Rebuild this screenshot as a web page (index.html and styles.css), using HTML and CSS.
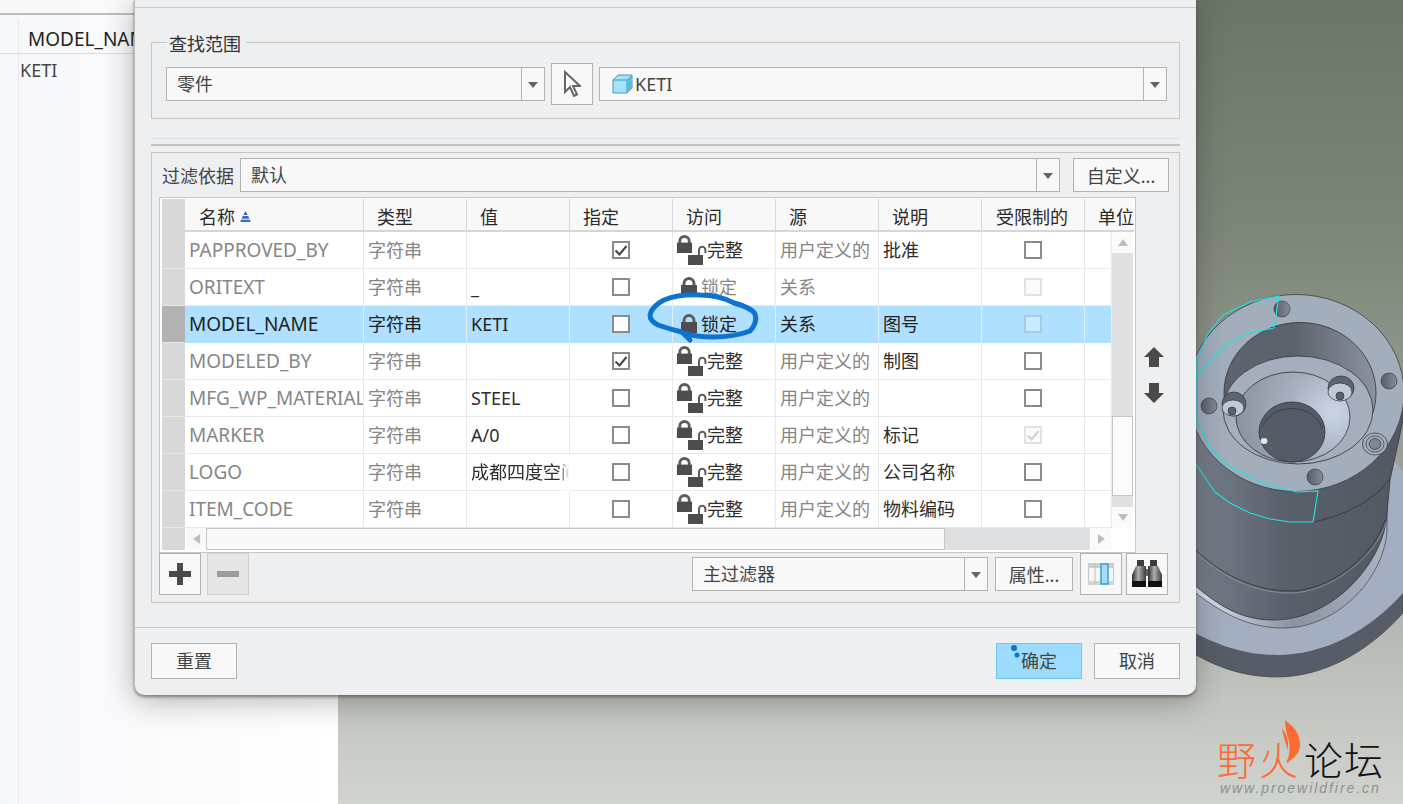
FILE: index.html
```html
<!DOCTYPE html>
<html lang="zh-CN">
<head>
<meta charset="utf-8">
<title>参数</title>
<link rel="stylesheet" href="styles.css">
</head>
<body>
<svg class="defs" width="0" height="0" aria-hidden="true">
  <defs>
    <symbol id="lock" viewBox="0 0 18 20">
      <path d="M4 9V6.500a5 5 0 0 1 10 0V9" fill="none" stroke="#5c5c5c" stroke-width="3"/>
      <rect x="1" y="8" width="16" height="11" fill="#4d4d4d"/>
    </symbol>
    <symbol id="lock-open" viewBox="0 0 19 20">
      <path d="M11 10V5a3.200 3.200 0 0 1 6.400 0V8" fill="none" stroke="#5c5c5c" stroke-width="2"/>
      <rect x="0" y="10" width="15" height="10" fill="#4d4d4d"/>
    </symbol>
    <symbol id="tick" viewBox="0 0 18 18">
      <path d="M3.500 9.500l4 4 7-8.500" fill="none" stroke="currentColor" stroke-width="2"/>
    </symbol>
  </defs>
</svg>

<div class="screen">
  <aside class="tree">
    <div class="tree-head"><span class="tree-gap"></span><span class="tree-title">MODEL_NAME</span></div>
    <div class="tree-row">KETI</div>
  </aside>

  <main class="viewport">
    <svg class="model" viewBox="338 0 1065 804" width="1065" height="804" aria-hidden="true">
      <defs>
        <linearGradient id="side" gradientUnits="userSpaceOnUse" x1="1190" x2="1400" y1="0" y2="0">
          <stop offset="0" stop-color="#78818d"/><stop offset=".45" stop-color="#5a606b"/><stop offset="1" stop-color="#535963"/>
        </linearGradient>
        <linearGradient id="wall" x1="0" x2="1" y1="0" y2="0">
          <stop offset="0" stop-color="#5e646e"/><stop offset=".45" stop-color="#5c626c"/><stop offset="1" stop-color="#8b939f"/>
        </linearGradient>
        <radialGradient id="bowl" gradientUnits="userSpaceOnUse" cx="1333" cy="412" r="95">
          <stop offset="0" stop-color="#cad6e7"/><stop offset=".5" stop-color="#a4aebd"/><stop offset="1" stop-color="#8b94a1"/>
        </radialGradient>
        <linearGradient id="bolt" x1="0" x2="1" y1="0" y2="0">
          <stop offset="0" stop-color="#565c66"/><stop offset="1" stop-color="#868d98"/>
        </linearGradient>
        <linearGradient id="fillet" gradientUnits="userSpaceOnUse" x1="1196" x2="1390" y1="0" y2="0">
          <stop offset="0" stop-color="#dfe5ee"/><stop offset=".5" stop-color="#8a93a1"/><stop offset="1" stop-color="#aab4c3"/>
        </linearGradient>
      </defs>
      <path d="M1180 500H1403V613C1370 650 1325 677 1277 677C1240 677 1210 665 1180 645Z" fill="#575d68" stroke="#3e424a" stroke-width=".7"/>
      <path d="M1393 460L1403 472V593C1370 630 1325 655 1277 655C1240 655 1210 642 1180 625V460Z" fill="#a3afc0"/>
      <path d="M1387 510V530C1385 575 1340 628 1283 628C1245 628 1215 610 1180 580V510Z" fill="url(#fillet)" stroke="#3e424a" stroke-width=".7"/>
      <path d="M1180 380H1403V420L1390 480L1387 513C1385 560 1335 620 1273 620C1240 620 1215 605 1180 572Z" fill="url(#side)" stroke="#30343a" stroke-width=".8"/>
      <path d="M1180 533C1210 570 1250 591 1290 591C1330 591 1375 555 1385 520" fill="none" stroke="#30343a" stroke-width=".8"/>
      <path d="M1180 535C1210 572 1250 593 1290 593C1330 593 1376 557 1386 522" fill="none" stroke="#8f98a6" stroke-width=".8"/>
      <path d="M1313 522C1350 515 1380 495 1390 478" fill="none" stroke="#30343a" stroke-width=".8"/>
      <ellipse cx="1296" cy="393" rx="108" ry="98.500" fill="#a3aebd" stroke="#3a3e45" stroke-width=".8"/>
      <ellipse cx="1300" cy="393" rx="76" ry="70.500" fill="url(#wall)" stroke="#2e3238" stroke-width=".8"/>
      <ellipse cx="1298" cy="410" rx="75" ry="54" fill="#a4aebd" stroke="#2e3238" stroke-width=".8"/>
      <ellipse cx="1293" cy="417" rx="57" ry="45" fill="url(#bowl)" stroke="#2e3238" stroke-width=".8"/>
      <ellipse cx="1292" cy="432" rx="33" ry="30" fill="#565c67" stroke="#2e3238" stroke-width=".8"/>
      <path d="M1262 428a31 26 0 0 1 60 0" fill="none" stroke="#2e3238" stroke-width=".7"/>
      <ellipse cx="1264" cy="441" rx="3.500" ry="3" fill="#e0e5ec"/>
      <g fill="url(#bolt)" stroke="#2e3238" stroke-width=".6">
        <circle cx="1282" cy="309" r="8"/>
        <circle cx="1389" cy="381" r="8"/>
        <circle cx="1209" cy="406" r="8"/>
        <circle cx="1315" cy="477" r="8"/>
      </g>
      <g stroke="#2e3238" stroke-width=".7">
        <ellipse cx="1341" cy="388" rx="13" ry="12" fill="#5f6570"/>
        <ellipse cx="1340" cy="392" rx="12" ry="9" fill="#c0c9d6"/>
        <ellipse cx="1340" cy="396" rx="4" ry="4" fill="#5b616c"/>
        <ellipse cx="1234" cy="404" rx="12" ry="12" fill="#5f6570"/>
        <ellipse cx="1233" cy="408" rx="11" ry="8" fill="#c0c9d6"/>
        <ellipse cx="1232" cy="411" rx="4" ry="4" fill="#5b616c"/>
        <ellipse cx="1375" cy="444" rx="12.500" ry="11" fill="#a3aebd"/>
        <ellipse cx="1375" cy="444" rx="9" ry="8" fill="#a8b1bf"/>
        <ellipse cx="1375" cy="444" rx="6" ry="5.500" fill="#7f8792"/>
      </g>
      <path d="M1274 328L1279 296L1250 302L1223 315L1207 335L1196 365V418L1210 448L1230 467L1267 485L1297 492L1318 491L1313 522L1290 522L1270 519L1250 513L1230 503L1215 492L1208 482L1190 455M1274 328L1250 333L1230 342L1213 357L1190 385" fill="none" stroke="#1de3e3" stroke-width="1.200"/>
    </svg>
    <div class="logo">
      <svg class="flame" viewBox="0 0 20 44" width="20" height="44" aria-hidden="true">
        <path d="M4 0C14 7 19 15 19 25C19 32 14 38 6 43C9 32 10 25 6 15C5 10 4 5 4 0zM1 8C5 13 8 20 7 30C6 27 3 20 1 8z" fill="#ff6a33"/>
      </svg>
      <div class="logo-name"><span class="logo-hot">野火</span><span class="logo-cold">论坛</span></div>
      <div class="logo-url">www.proewildfire.cn</div>
    </div>
  </main>

  <section class="dialog">
    <div class="dialog-top"></div>
    <div class="dialog-body">
      <fieldset class="scope">
        <legend>查找范围</legend>
        <div class="scope-row">
          <div class="combo combo-part"><span class="combo-text">零件</span><span class="combo-arrow"></span></div>
          <button class="btn-icon" type="button" aria-label="选择">
            <svg viewBox="0 0 18 28" width="18" height="28"><path d="M2 2v20l5-5 4 9 3-1.500-4-8.500h7z" fill="#fff" stroke="#666" stroke-width="2"/></svg>
          </button>
          <div class="combo combo-model">
            <span class="combo-text combo-model-text">
              <svg viewBox="0 0 22 20" width="22" height="20"><path d="M1 6l5-5h14v13l-5 5H1z" fill="#a6e3f8" stroke="#3f9cc2"/><path d="M1 6h14v13M15 6l5-5" fill="none" stroke="#3f9cc2"/><path d="M15 6l5-5v13l-5 5z" fill="#5dbbdc"/></svg>KETI
            </span><span class="combo-arrow"></span>
          </div>
        </div>
      </fieldset>

      <div class="sash"></div>

      <div class="panel">
        <div class="filter-row">
          <span class="filter-label">过滤依据</span>
          <div class="combo combo-filter"><span class="combo-text">默认</span><span class="combo-arrow"></span></div>
          <button class="btn btn-custom" type="button">自定义...</button>
        </div>

        <div class="table-line">
          <div class="table">
            <div class="row head">
              <span class="gut"></span>
              <span class="c c-name">名称<svg class="sort" viewBox="0 0 12 12" width="13" height="13"><path d="M6 1l2 3.500H4zM3.500 5.500h5l1 2.500h-7zM1.500 9h9v2h-9z" fill="#3b69c4"/></svg></span>
              <span class="c c-h">类型</span>
              <span class="c c-h c-v">值</span>
              <span class="c c-h">指定</span>
              <span class="c c-h">访问</span>
              <span class="c c-h c-v">源</span>
              <span class="c c-h">说明</span>
              <span class="c c-lim">受限制的</span>
              <span class="c c-h c-unit">单位</span>
            </div>
            <div class="table-mid">
              <div class="rows">
                <div class="row">
                  <span class="gut"></span><span class="c c-left c-latin dim">PAPPROVED_BY</span><span class="c c-left dim">字符串</span><span class="c c-left"></span>
                  <span class="c c-mid"><span class="cb"><svg width="18" height="18"><use href="#tick"/></svg></span></span>
                  <span class="c acc"><svg class="i1" width="17" height="19"><use href="#lock"/></svg><svg class="i2" width="19" height="20"><use href="#lock-open"/></svg><span class="full">完整</span></span>
                  <span class="c c-left dim">用户定义的</span><span class="c c-left">批准</span>
                  <span class="c c-mid"><span class="cb"></span></span><span class="c"></span>
                </div>
                <div class="row">
                  <span class="gut"></span><span class="c c-left c-latin dim">ORITEXT</span><span class="c c-left dim">字符串</span><span class="c c-left">_</span>
                  <span class="c c-mid"><span class="cb"></span></span>
                  <span class="c acc acc-lock"><svg width="18" height="20"><use href="#lock"/></svg><span class="dim">锁定</span></span>
                  <span class="c c-left dim">关系</span><span class="c c-left"></span>
                  <span class="c c-mid"><span class="cb cb-off"></span></span><span class="c"></span>
                </div>
                <div class="row sel">
                  <span class="gut"></span><span class="c c-left c-latin">MODEL_NAME</span><span class="c c-left">字符串</span><span class="c c-left">KETI</span>
                  <span class="c c-mid"><span class="cb"></span></span>
                  <span class="c acc acc-lock"><svg width="18" height="20"><use href="#lock"/></svg><span>锁定</span></span>
                  <span class="c c-left">关系</span><span class="c c-left">图号</span>
                  <span class="c c-mid"><span class="cb cb-sel"></span></span><span class="c"></span>
                </div>
                <div class="row">
                  <span class="gut"></span><span class="c c-left c-latin dim">MODELED_BY</span><span class="c c-left dim">字符串</span><span class="c c-left"></span>
                  <span class="c c-mid"><span class="cb"><svg width="18" height="18"><use href="#tick"/></svg></span></span>
                  <span class="c acc"><svg class="i1" width="17" height="19"><use href="#lock"/></svg><svg class="i2" width="19" height="20"><use href="#lock-open"/></svg><span class="full">完整</span></span>
                  <span class="c c-left dim">用户定义的</span><span class="c c-left">制图</span>
                  <span class="c c-mid"><span class="cb"></span></span><span class="c"></span>
                </div>
                <div class="row">
                  <span class="gut"></span><span class="c c-left c-latin dim">MFG_WP_MATERIAL</span><span class="c c-left dim">字符串</span><span class="c c-left">STEEL</span>
                  <span class="c c-mid"><span class="cb"></span></span>
                  <span class="c acc"><svg class="i1" width="17" height="19"><use href="#lock"/></svg><svg class="i2" width="19" height="20"><use href="#lock-open"/></svg><span class="full">完整</span></span>
                  <span class="c c-left dim">用户定义的</span><span class="c c-left"></span>
                  <span class="c c-mid"><span class="cb"></span></span><span class="c"></span>
                </div>
                <div class="row">
                  <span class="gut"></span><span class="c c-left c-latin dim">MARKER</span><span class="c c-left dim">字符串</span><span class="c c-left">A/0</span>
                  <span class="c c-mid"><span class="cb"></span></span>
                  <span class="c acc"><svg class="i1" width="17" height="19"><use href="#lock"/></svg><svg class="i2" width="19" height="20"><use href="#lock-open"/></svg><span class="full">完整</span></span>
                  <span class="c c-left dim">用户定义的</span><span class="c c-left">标记</span>
                  <span class="c c-mid"><span class="cb cb-off cb-offtick"><svg width="18" height="18"><use href="#tick"/></svg></span></span><span class="c"></span>
                </div>
                <div class="row">
                  <span class="gut"></span><span class="c c-left c-latin dim">LOGO</span><span class="c c-left dim">字符串</span><span class="c c-left c-fade">成都四度空间</span>
                  <span class="c c-mid"><span class="cb"></span></span>
                  <span class="c acc"><svg class="i1" width="17" height="19"><use href="#lock"/></svg><svg class="i2" width="19" height="20"><use href="#lock-open"/></svg><span class="full">完整</span></span>
                  <span class="c c-left dim">用户定义的</span><span class="c c-left">公司名称</span>
                  <span class="c c-mid"><span class="cb"></span></span><span class="c"></span>
                </div>
                <div class="row">
                  <span class="gut"></span><span class="c c-left c-latin dim">ITEM_CODE</span><span class="c c-left dim">字符串</span><span class="c c-left"></span>
                  <span class="c c-mid"><span class="cb"></span></span>
                  <span class="c acc"><svg class="i1" width="17" height="19"><use href="#lock"/></svg><svg class="i2" width="19" height="20"><use href="#lock-open"/></svg><span class="full">完整</span></span>
                  <span class="c c-left dim">用户定义的</span><span class="c c-left">物料编码</span>
                  <span class="c c-mid"><span class="cb"></span></span><span class="c"></span>
                </div>
              </div>
              <div class="vbar">
                <span class="sb-btn"><span class="tri tri-up"></span></span>
                <span class="sb-track sb-track-a"></span>
                <span class="sb-thumb"></span>
                <span class="sb-track sb-track-b"></span>
                <span class="sb-btn"><span class="tri tri-down"></span></span>
              </div>
            </div>
            <div class="hbar">
              <span class="gut"></span>
              <span class="hb-btn"><span class="tri tri-left"></span></span>
              <span class="hb-thumb"></span>
              <span class="hb-track"></span>
              <span class="hb-btn hb-right"><span class="tri tri-right"></span></span>
            </div>
          </div>
          <div class="move">
            <svg viewBox="0 0 20 20" width="20" height="20"><path d="M10 0l10 10h-5v10H5V10H0z" fill="#4a4a4a"/></svg>
            <svg viewBox="0 0 20 20" width="20" height="20"><path d="M5 0h10v10h5L10 20 0 10h5z" fill="#4a4a4a"/></svg>
          </div>
        </div>

        <div class="tools">
          <button class="btn-icon" type="button" aria-label="添加">
            <svg viewBox="0 0 22 22" width="22" height="22"><path d="M8 0h6v8h8v6h-8v8H8v-8H0V8h8z" fill="#4a4a4a"/></svg>
          </button>
          <button class="btn-icon btn-off" type="button" aria-label="删除">
            <svg viewBox="0 0 22 6" width="22" height="6"><rect width="22" height="6" fill="#9c9c9c"/></svg>
          </button>
          <span class="tools-gap"></span>
          <div class="combo combo-main"><span class="combo-text">主过滤器</span><span class="combo-arrow"></span></div>
          <button class="btn btn-prop" type="button">属性...</button>
          <button class="btn-icon" type="button" aria-label="列">
            <svg viewBox="0 0 26 22" width="26" height="22"><rect x="0.500" y="0.500" width="25" height="21" fill="#f6f6f6" stroke="#c4c4c4"/><rect x="0" y="0" width="26" height="5" fill="#cdcdcd"/><rect x="0" y="18" width="26" height="4" fill="#d4d4d4"/><path d="M7 0v22M19 0v22" stroke="#c0c0c0" fill="none"/><rect x="13" y="1" width="7" height="20" fill="#a8def3" stroke="#2ea3d2" stroke-width="1.500"/></svg>
          </button>
          <button class="btn-icon" type="button" aria-label="查找">
            <svg viewBox="0 0 30 28" width="30" height="28"><defs><linearGradient id="bino" x1="0" x2="1" y1="0" y2="0"><stop offset="0" stop-color="#2e2e2e"/><stop offset=".45" stop-color="#b0b0b0"/><stop offset="1" stop-color="#3a3a3a"/></linearGradient></defs><path d="M5 0h7v6H5zM18 0h7v6h-7z" fill="#3c3c3c"/><path d="M12 9h6v7h-6z" fill="#666"/><path d="M4 6h10v15H0v-6z" fill="url(#bino)"/><path d="M16 6h10l4 9v6H16z" fill="url(#bino)"/><path d="M0 21h14v6H0zM16 21h14v6H16z" fill="#111"/></svg>
          </button>
        </div>
      </div>
    </div>
    <div class="dialog-foot">
      <button class="btn btn-foot" type="button">重置</button>
      <span class="foot-gap"></span>
      <button class="btn btn-foot btn-ok" type="button">确定</button>
      <button class="btn btn-foot" type="button">取消</button>
    </div>
    <svg class="ink" viewBox="0 0 1062 695" width="1062" height="695" aria-hidden="true">
      <path d="M556 340L548 332Q532 328 524 325Q516 321 516 315Q518 306 530 300Q545 294 566 295Q585 295 600 303Q618 308 621 314Q624 322 616 331Q600 337 579 337Q562 337 549 333" fill="none" stroke="#0d72d2" stroke-width="5" stroke-linecap="round" stroke-linejoin="round"/>
      <circle cx="880" cy="648" r="3" fill="#0d72d2"/>
      <circle cx="883" cy="655" r="2.500" fill="#0d72d2"/>
    </svg>
  </section>
</div>
</body>
</html>
```
FILE: styles.css
```css
* { box-sizing: border-box; }
html, body { margin: 0; height: 100%; overflow: hidden; }
body { font-family: "Noto Sans", "Noto Sans CJK SC", sans-serif; font-size: 18px; color: #2e2e2e; background: #fff; }
.defs { position: absolute; }
button { font: inherit; color: inherit; padding: 0; margin: 0; }

.screen { position: relative; width: 1403px; height: 804px; display: flex; overflow: hidden; }

/* left tree */
.tree { width: 338px; flex: none; padding-top: 13px; background: linear-gradient(#e6e7e9, #e6e7e9) 18px 21px / 1px 100% no-repeat, linear-gradient(90deg, #f6f7f9, #ffffff); }
.tree-head { height: 41px; border-top: 2px solid #bdbdbd; border-bottom: 1px solid #dcdcdc; display: flex; }
.tree-gap { width: 19px; }
.tree-title { padding: 12px 0 0 9px; line-height: 25px; font-size: 19px; color: #222; white-space: nowrap; }
.tree-row { padding-left: 20px; line-height: 32px; color: #444; }

/* viewport */
.viewport { position: relative; flex: 1; background: linear-gradient(180deg, #6b7566 0%, #7e8679 30%, #a3a8a0 65%, #c6c9c3 90%, #d0d3ce 100%); }
.model { position: absolute; left: 0; top: 0; display: block; }
.logo { position: absolute; left: 878px; top: 720px; width: 170px; height: 78px; }
.flame { position: absolute; left: 65px; top: 0; }
.logo-name { position: absolute; left: 0; top: 20px; display: flex; font-size: 39px; line-height: 40px; font-weight: 300; white-space: nowrap; }
.logo-hot { color: #ff6a33; width: 88px; letter-spacing: 3px; padding-left: 1px; }
.logo-cold { color: #111; letter-spacing: 1px; }
.logo-url { position: absolute; left: 4px; top: 59px; font-family: "Liberation Sans", sans-serif; font-style: italic; font-size: 14px; line-height: 18px; letter-spacing: 1.950px; color: #8e918d; white-space: nowrap; }

/* dialog */
.dialog { position: absolute; left: 134px; top: 0; width: 1062px; height: 695px; background: #eeeff1; border-left: 1px solid #b9b9b9; border-radius: 0 0 10px 10px; box-shadow: 0 2px 3px rgba(60,60,60,.55), 0 6px 30px rgba(40,40,40,.35); display: flex; flex-direction: column; }
.dialog-top { height: 8px; flex: none; border-bottom: 1px solid #c9c9c9; }
.dialog-body { flex: 1; padding: 22px 16px 0; }
.dialog-foot { height: 68px; flex: none; border-top: 1px solid #c9c9c9; padding: 15px 16px 0; display: flex; align-items: flex-start; gap: 12px; }
.foot-gap { flex: 1; }

.scope { margin: 0; padding: 0 12px 0 14px; height: 89px; border: 1px solid #c6c6c6; min-inline-size: auto; }
.scope legend { padding: 4px 5px 0 2px; margin-left: 1px; font-size: 18px; line-height: 20px; color: #333; }
.scope-row { display: flex; align-items: center; gap: 6px; margin-top: 9px; height: 42px; }

.combo { height: 34px; background: #f8f8f8; border: 1px solid #b2b2b2; display: flex; align-items: stretch; flex: none; }
.combo-text { flex: 1; padding-left: 10px; line-height: 33px; color: #444; font-size: 18px; overflow: hidden; white-space: nowrap; }
.combo-arrow { width: 23px; flex: none; border-left: 1px solid #b2b2b2; position: relative; }
.combo-arrow::after { content: ""; position: absolute; left: 6px; top: 14px; border: 5px solid transparent; border-top: 6px solid #666; border-bottom: 0; }
.combo-part { width: 379px; }
.combo-model { width: 568px; }
.combo-model-text { display: flex; align-items: center; gap: 1px; padding-left: 12px; }
.combo-filter { width: 820px; }
.combo-main { width: 296px; }

.btn-icon { width: 42px; height: 42px; flex: none; background: #f8f8f8; border: 1px solid #b2b2b2; display: flex; align-items: center; justify-content: center; }
.btn-icon svg { display: block; }
.btn-off { background: #e5e6e8; border-color: #cfcfcf; }
.btn { height: 34px; background: #f8f8f8; border: 1px solid #b2b2b2; flex: none; color: #444; font-size: 18px; line-height: 30px; padding-top: 1px; }
.btn-custom { width: 96px; margin-left: 13px; }
.btn-prop { width: 78px; }
.btn-foot { width: 86px; height: 36px; padding-top: 0; }
.btn-ok { background: #9edcff; border-color: #6cc4f0; }

.sash { height: 8px; margin-top: 19px; border-top: 1px solid #dedfe1; border-bottom: 2px solid #c2c2c2; }

.panel { margin-top: 6px; height: 451px; border: 1px solid #c6c6c6; padding: 5px 10px 0 7px; }
.filter-row { display: flex; align-items: center; height: 34px; }
.filter-label { width: 81px; flex: none; padding-left: 3px; font-size: 18px; color: #444; white-space: nowrap; }
.table-line { display: flex; margin-top: 5px; }
.table { width: 977px; height: 356px; flex: none; border: 1px solid #c6c6c6; padding: 1px 2px 0; background: #fff; overflow: hidden; }
.move { flex: 1; display: flex; flex-direction: column; gap: 16px; align-items: center; padding-top: 150px; padding-left: 3px; }
.move svg { display: block; }

.row { display: grid; grid-template-columns: 23px 179px repeat(7, 103px) 27px; height: 37px; }
.row > .c { border-right: 1px solid #e8e9eb; border-bottom: 1px solid #e8e9eb; min-width: 0; overflow: hidden; white-space: nowrap; line-height: 36px; }
.gut { background: #d8d8d8; border-bottom: 1px solid #e8e8e8; }
.c-left { padding-left: 4px; }
.row > .c-latin { font-size: 19px; }
.c-mid { display: flex; align-items: center; justify-content: center; }
.c-fade { -webkit-mask-image: linear-gradient(90deg, #000 88%, transparent 100%); mask-image: linear-gradient(90deg, #000 88%, transparent 100%); }
.dim { color: #808080; }
.row .c { color: #2e2e2e; }
.row .c.dim, .row .c .dim { color: #868686; }
.sel { background: #b0e0ff; }
.sel .gut { background: #b2b2b2; }
.sel .c, .row.sel .c { color: #222; border-bottom-color: #b0e0ff; border-right-color: #dff2ff; }

.row.head { height: 33px; grid-template-columns: 23px 179px repeat(7, 103px) 49px; background: #f8f8f8; }
.head .gut { border-bottom: 0; }
.head .c { line-height: 37px; border-right: 1px solid #d5d6d8; border-bottom: 2px solid #d5d6d8; color: #2a2a2a; font-size: 18px; }
.c-name { padding-left: 14px; }
.sort { margin-left: 4px; vertical-align: 1px; }
.c-h { padding-left: 13px; }
.c-v { padding-left: 13px; }
.c-lim { padding-left: 14px; }
.head .c-unit { border-right: 0; }

.cb { width: 18px; height: 18px; border: 2px solid #8b8b8b; background: #fff; display: block; position: relative; color: #444; }
.cb svg { position: absolute; left: -2px; top: -2px; display: block; }
.cb-off { border-color: #e2e2e2; background: #fbfbfb; }
.cb-offtick { color: #cfcfcf; }
.cb-sel { border-color: #a5cde2; background: #c9ebff; }

.acc { position: relative; }
.acc .i1 { position: absolute; left: 3px; top: 3px; }
.acc .i2 { position: absolute; left: 15px; top: 13px; }
.acc .full { position: absolute; left: 34px; top: 0; }
.acc-lock { display: flex; align-items: center; padding-left: 7px; gap: 3px; }
.acc-lock svg { flex: none; margin-top: -1px; }

.table-mid { display: flex; height: 296px; }
.rows { width: 950px; flex: none; overflow: hidden; }
.vbar { width: 21px; flex: none; display: flex; flex-direction: column; }
.sb-btn { height: 21px; flex: none; background: #fafafa; display: flex; align-items: center; justify-content: center; }
.sb-track { background: #dfe0e2; flex: none; }
.sb-track-a { height: 163px; }
.sb-track-b { height: 11px; }
.sb-thumb { height: 80px; flex: none; background: #fbfbfb; border: 1px solid #c6c6c6; }
.hbar { display: flex; height: 22px; }
.hbar .gut { width: 23px; flex: none; border: 0; }
.hb-btn { width: 21px; flex: none; background: #f8f8f8; display: flex; align-items: center; justify-content: center; border-left: 1px solid #fff; }
.hb-thumb { width: 739px; flex: none; background: #f8f8f8; border: 1px solid #c6c6c6; }
.hb-track { width: 145px; flex: none; background: #dfe0e2; }
.hb-right { background: #fafafa; }
.tri { width: 0; height: 0; border: 5px solid transparent; display: block; }
.tri-up { border-top: 0; border-bottom: 7px solid #bdbdbd; }
.tri-down { border-bottom: 0; border-top: 7px solid #bdbdbd; }
.tri-left { border-left: 0; border-right: 7px solid #bdbdbd; }
.tri-right { border-right: 0; border-left: 7px solid #bdbdbd; }

.tools { display: flex; align-items: center; height: 42px; gap: 6px; }
.tools-gap { width: 431px; flex: none; }
.tools .btn-prop { margin-left: 1px; }
.tools .combo-main + .btn-prop + .btn-icon { margin-left: 1px; margin-right: -2px; }

.ink { position: absolute; left: -1px; top: 0; pointer-events: none; }
```
